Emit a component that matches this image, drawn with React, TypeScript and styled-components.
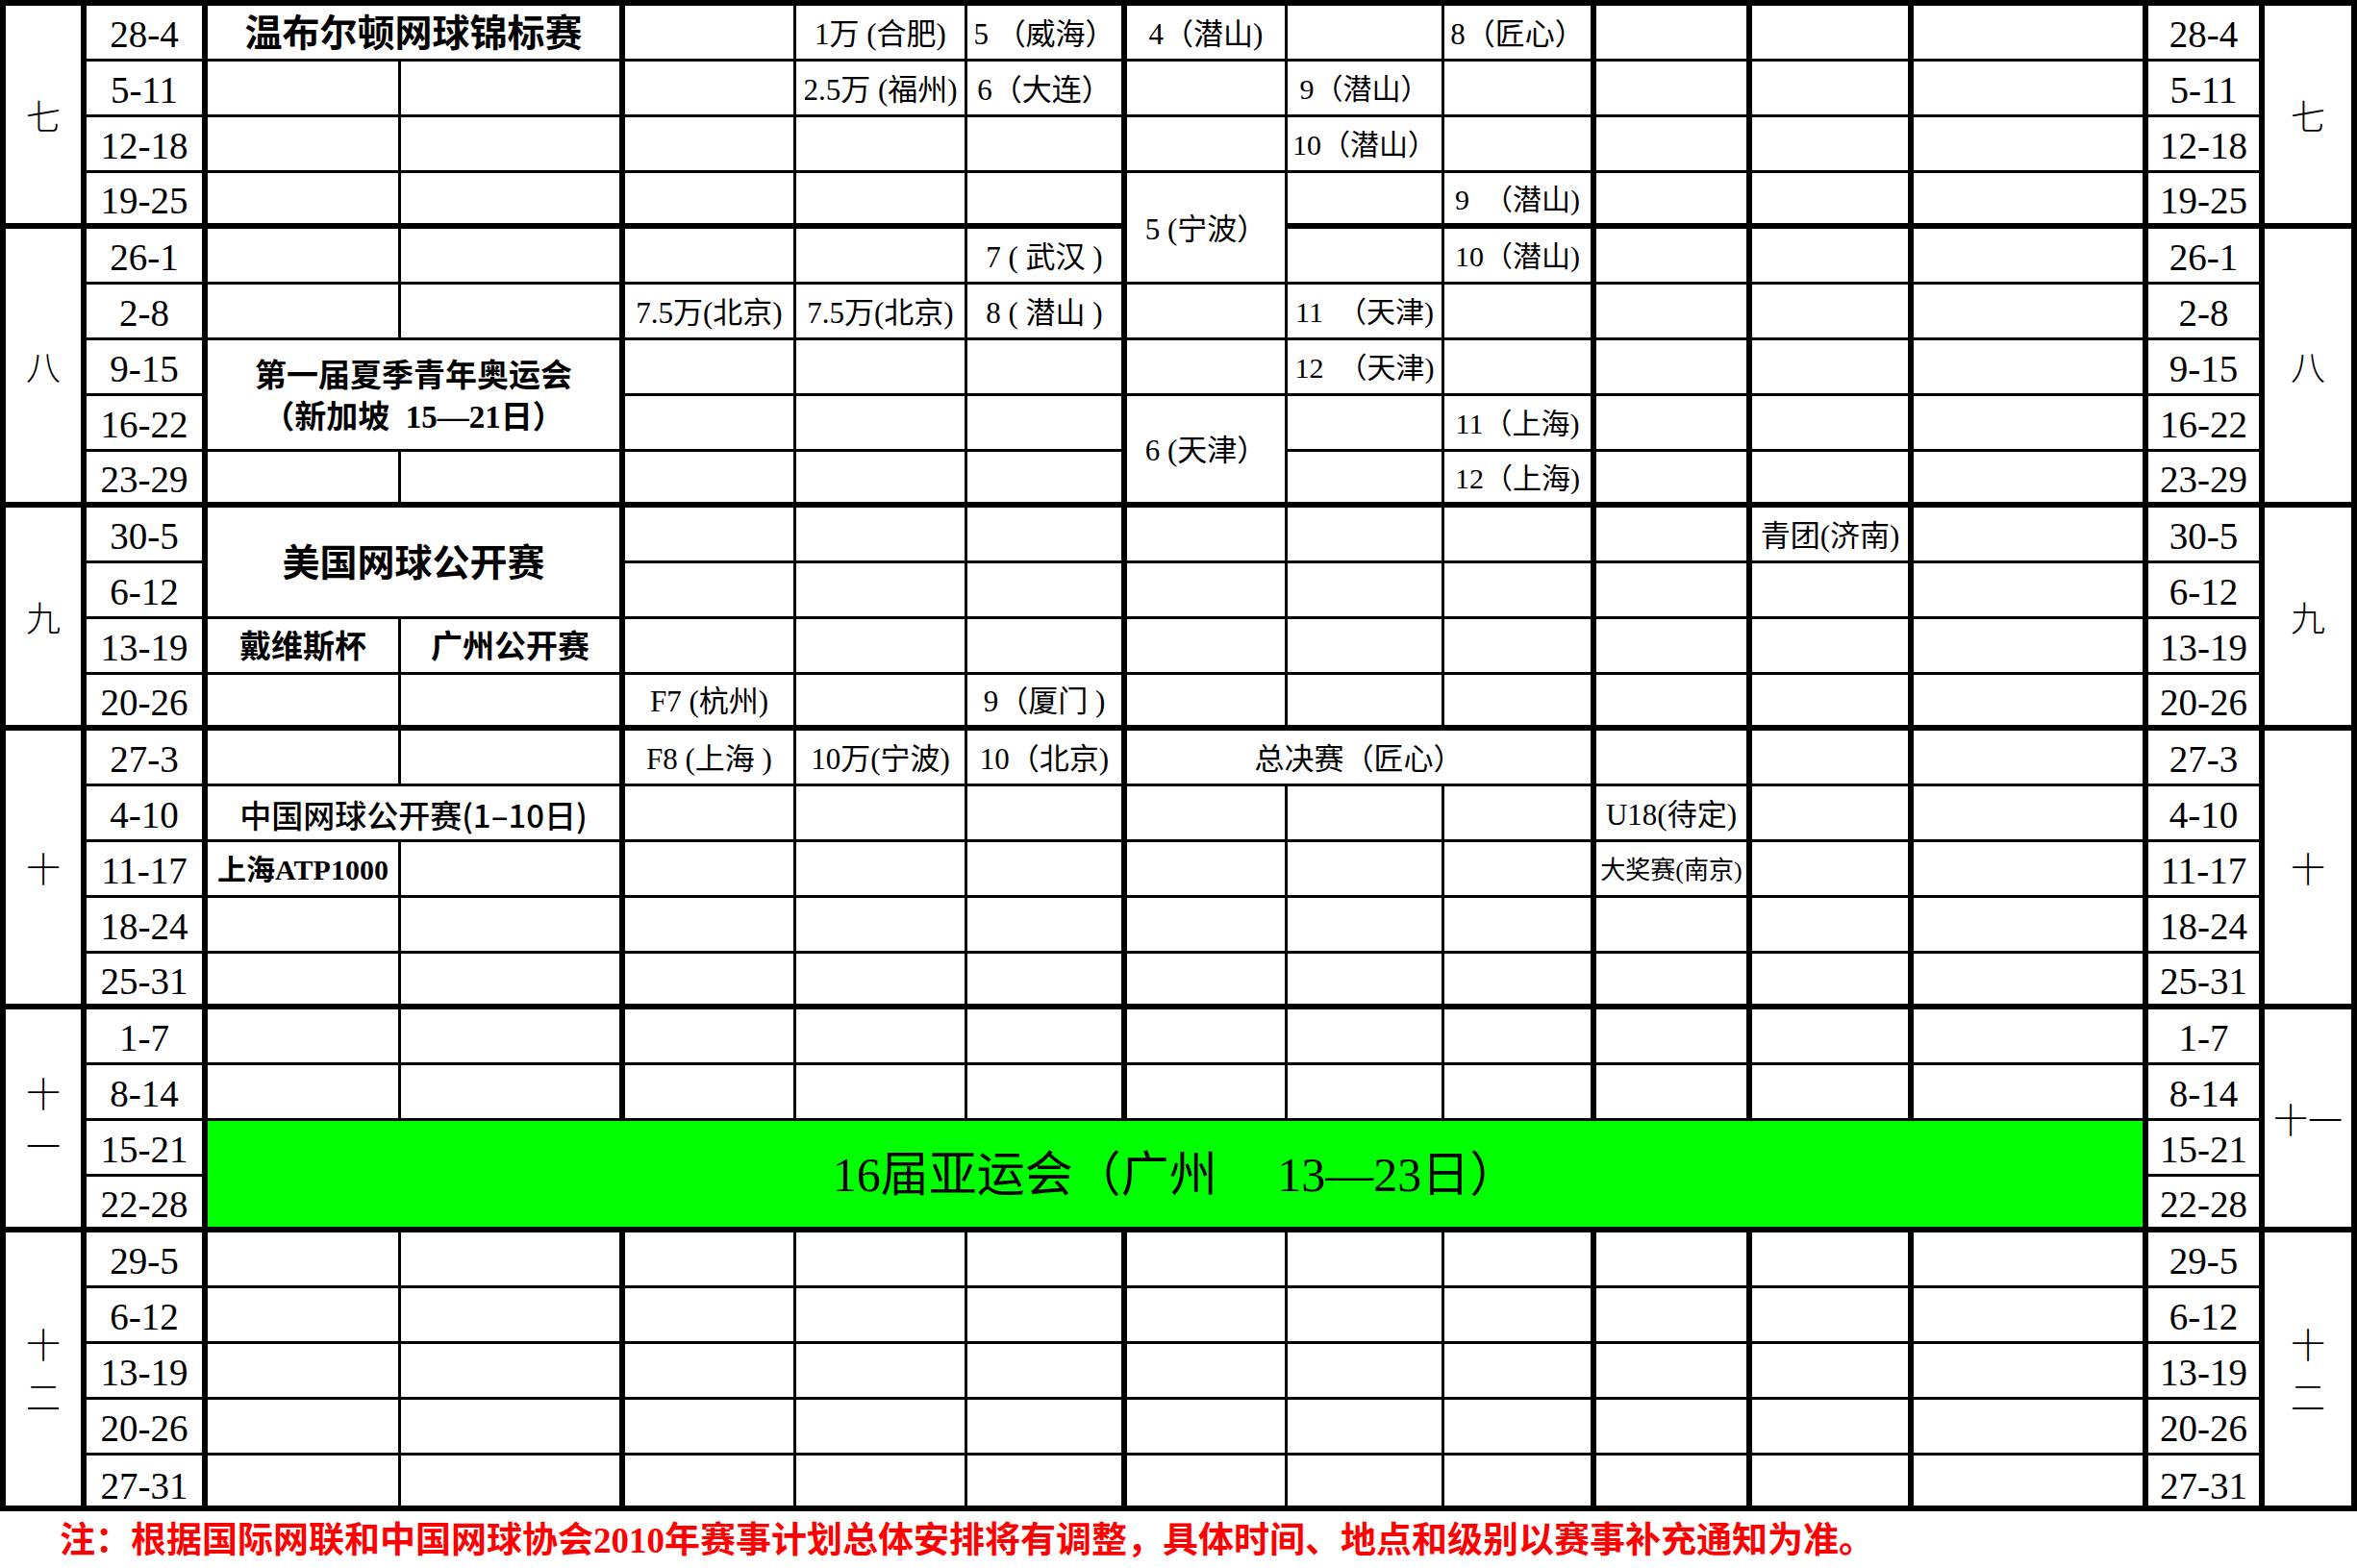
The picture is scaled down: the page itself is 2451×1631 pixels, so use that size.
import React from 'react';
import styled, { createGlobalStyle } from 'styled-components';

const GlobalStyle = createGlobalStyle`
  html, body { margin: 0; padding: 0; background: #ffffff; }
  body { font-family: "Liberation Serif", "Noto Sans CJK SC", serif; color: #000; }
`;

const COL_WIDTHS = [84, 126, 201, 233, 178, 178, 166, 167, 163, 158, 162, 168, 244, 121, 96];
const RIGHT_LINE = [6, 6, 3, 6, 3, 3, 6, 3, 3, 6, 6, 6, 6, 6, 6];
const MONTH_END = new Set([4, 9, 13, 18, 22, 27]);
const ROWS = 27;
const COLS = 15;

const Page = styled.div`
  width: 2451px;
`;

const ScheduleGrid = styled.div`
  display: grid;
  grid-template-columns: ${COL_WIDTHS.map((w) => `${w}px`).join(' ')};
  grid-template-rows: repeat(${ROWS}, 58px);
  border-top: 6px solid #000;
  border-left: 6px solid #000;
`;

interface CellProps {
  $r: number;
  $c: number;
  $rs: number;
  $cs: number;
  $rb: number;
  $bb: number;
}

const Cell = styled.div<CellProps>`
  grid-row: ${(p) => p.$r} / span ${(p) => p.$rs};
  grid-column: ${(p) => p.$c} / span ${(p) => p.$cs};
  border-right: ${(p) => p.$rb}px solid #000;
  border-bottom: ${(p) => p.$bb}px solid #000;
  box-sizing: border-box;
  display: flex;
  align-items: center;
  justify-content: center;
  white-space: nowrap;
  overflow: hidden;
  min-width: 0;
  background: #fff;
`;

const MonthCell = styled(Cell)<{ $stack?: boolean }>`
  flex-direction: ${(p) => (p.$stack ? 'column' : 'row')};
  font-family: "Noto Sans CJK SC", sans-serif;
  font-weight: 300;
  font-size: 36px;
  line-height: ${(p) => (p.$stack ? '54px' : '40px')};
`;

const DateCell = styled(Cell)<{ $low?: boolean }>`
  font-family: "Liberation Serif", serif;
  font-size: 39px;
  line-height: 40px;
  align-items: ${(p) => (p.$low ? 'flex-end' : 'center')};
  padding-top: ${(p) => (p.$low ? 0 : 5)}px;
`;

type Variant = 'plain' | 'tight' | 'title' | 'bold' | 'youth' | 'sans' | 'atp' | 'small' | 'asian';

const VARIANT_FONT: Record<Variant, string> = {
  plain: 'font-size: 31px; font-weight: 400;',
  tight: 'font-size: 30px; font-weight: 400;',
  title: 'font-size: 39px; font-weight: 700;',
  bold: 'font-size: 33px; font-weight: 700;',
  youth: 'font-size: 33px; font-weight: 700;',
  sans: 'font-size: 33px; font-weight: 500; font-family: "Noto Sans CJK SC", sans-serif;',
  atp: 'font-size: 30px; font-weight: 700;',
  small: 'font-size: 26px; font-weight: 400;',
  asian: 'font-size: 50px; font-weight: 400;',
};

const EventCell = styled(Cell)<{ $v: Variant }>`
  font-family: "Liberation Serif", "Noto Sans CJK SC", serif;
  line-height: 1.15;
  padding-top: 4px;
  flex-direction: ${(p) => (p.$v === 'youth' ? 'column' : 'row')};
  background: ${(p) => (p.$v === 'asian' ? '#00ff00' : '#fff')};
  ${(p) => VARIANT_FONT[p.$v]}
`;

const YouthLine = styled.span`
  display: block;
  line-height: 43px;
`;

const StackChar = styled.span`
  display: block;
`;

const Note = styled.div`
  color: #ff0000;
  font-family: "Liberation Serif", "Noto Sans CJK SC", sans-serif;
  font-weight: 700;
  font-size: 37px;
  line-height: 44px;
  padding: 9px 0 0 62px;
  white-space: nowrap;
`;

interface Ev {
  r: number;
  c: number;
  rs?: number;
  cs?: number;
  text: React.ReactNode;
  v?: Variant;
}

const DATES = [
  '28-4', '5-11', '12-18', '19-25',
  '26-1', '2-8', '9-15', '16-22', '23-29',
  '30-5', '6-12', '13-19', '20-26',
  '27-3', '4-10', '11-17', '18-24', '25-31',
  '1-7', '8-14', '15-21', '22-28',
  '29-5', '6-12', '13-19', '20-26', '27-31',
];

interface Month {
  label: string;
  start: number;
  span: number;
  stackLeft?: boolean;
  stackRight?: boolean;
}

const MONTHS: Month[] = [
  { label: '七', start: 1, span: 4 },
  { label: '八', start: 5, span: 5 },
  { label: '九', start: 10, span: 4 },
  { label: '十', start: 14, span: 5 },
  { label: '十一', start: 19, span: 4, stackLeft: true },
  { label: '十二', start: 23, span: 5, stackLeft: true, stackRight: true },
];

const EVENTS: Ev[] = [
  { r: 1, c: 3, cs: 2, text: '温布尔顿网球锦标赛', v: 'title' },
  { r: 1, c: 6, text: '1万 (合肥)' },
  { r: 1, c: 7, text: '5 （威海）' },
  { r: 1, c: 8, text: '4（潜山)' },
  { r: 1, c: 10, text: '8（匠心）' },
  { r: 2, c: 6, text: '2.5万 (福州)' },
  { r: 2, c: 7, text: '6（大连）' },
  { r: 2, c: 9, text: '9（潜山）', v: 'tight' },
  { r: 3, c: 9, text: '10（潜山）', v: 'tight' },
  { r: 4, c: 8, rs: 2, text: '5 (宁波）' },
  { r: 4, c: 10, text: '9　（潜山)', v: 'tight' },
  { r: 5, c: 7, text: '7 ( 武汉 )' },
  { r: 5, c: 10, text: '10（潜山)', v: 'tight' },
  { r: 6, c: 5, text: '7.5万(北京)' },
  { r: 6, c: 6, text: '7.5万(北京)' },
  { r: 6, c: 7, text: '8 ( 潜山 )' },
  { r: 6, c: 9, text: '11　（天津)', v: 'tight' },
  {
    r: 7,
    c: 3,
    rs: 2,
    cs: 2,
    v: 'youth',
    text: (
      <>
        <YouthLine>第一届夏季青年奥运会</YouthLine>
        <YouthLine>（新加坡&nbsp;&nbsp;15—21日）</YouthLine>
      </>
    ),
  },
  { r: 7, c: 9, text: '12　（天津)', v: 'tight' },
  { r: 8, c: 8, rs: 2, text: '6 (天津）' },
  { r: 8, c: 10, text: '11（上海)', v: 'tight' },
  { r: 9, c: 10, text: '12（上海)', v: 'tight' },
  { r: 10, c: 3, rs: 2, cs: 2, text: '美国网球公开赛', v: 'title' },
  { r: 10, c: 12, text: '青团(济南)' },
  { r: 12, c: 3, text: '戴维斯杯', v: 'bold' },
  { r: 12, c: 4, text: '广州公开赛', v: 'bold' },
  { r: 13, c: 5, text: 'F7 (杭州)' },
  { r: 13, c: 7, text: '9（厦门 )' },
  { r: 14, c: 5, text: 'F8 (上海 )' },
  { r: 14, c: 6, text: '10万(宁波)' },
  { r: 14, c: 7, text: '10（北京)' },
  { r: 14, c: 8, cs: 3, text: '总决赛（匠心）' },
  { r: 15, c: 3, cs: 2, text: '中国网球公开赛(1–10日)', v: 'sans' },
  { r: 15, c: 11, text: 'U18(待定)' },
  { r: 16, c: 3, text: '上海ATP1000', v: 'atp' },
  { r: 16, c: 11, text: '大奖赛(南京)', v: 'small' },
  { r: 21, c: 3, rs: 2, cs: 11, text: '16届亚运会（广州　 13—23日）', v: 'asian' },
];

const rightLine = (c: number, cs: number) => RIGHT_LINE[c + cs - 2];
const bottomLine = (r: number, rs: number) => (MONTH_END.has(r + rs - 1) ? 6 : 3);

function buildCells(): React.ReactNode[] {
  const occ: boolean[][] = Array.from({ length: ROWS + 1 }, () => Array(COLS + 1).fill(false));
  const out: React.ReactNode[] = [];
  const mark = (r: number, c: number, rs: number, cs: number) => {
    for (let i = r; i < r + rs; i++) for (let j = c; j < c + cs; j++) occ[i][j] = true;
  };

  MONTHS.forEach((m) => {
    [1, 15].forEach((col) => {
      const stack = col === 1 ? m.stackLeft : m.stackRight;
      mark(m.start, col, m.span, 1);
      out.push(
        <MonthCell
          key={`m-${m.start}-${col}`}
          $r={m.start}
          $c={col}
          $rs={m.span}
          $cs={1}
          $rb={rightLine(col, 1)}
          $bb={bottomLine(m.start, m.span)}
          $stack={stack}
        >
          {stack ? m.label.split('').map((ch, i) => <StackChar key={i}>{ch}</StackChar>) : m.label}
        </MonthCell>
      );
    });
  });

  DATES.forEach((d, i) => {
    const r = i + 1;
    [2, 14].forEach((col) => {
      mark(r, col, 1, 1);
      out.push(
        <DateCell
          key={`d-${r}-${col}`}
          $r={r}
          $c={col}
          $rs={1}
          $cs={1}
          $rb={rightLine(col, 1)}
          $bb={bottomLine(r, 1)}
          $low={r === ROWS}
        >
          {d}
        </DateCell>
      );
    });
  });

  EVENTS.forEach((e, i) => {
    const rs = e.rs ?? 1;
    const cs = e.cs ?? 1;
    mark(e.r, e.c, rs, cs);
    out.push(
      <EventCell
        key={`e-${i}`}
        $r={e.r}
        $c={e.c}
        $rs={rs}
        $cs={cs}
        $rb={rightLine(e.c, cs)}
        $bb={bottomLine(e.r, rs)}
        $v={e.v ?? 'plain'}
      >
        {e.text}
      </EventCell>
    );
  });

  for (let r = 1; r <= ROWS; r++) {
    for (let c = 1; c <= COLS; c++) {
      if (occ[r][c]) continue;
      out.push(
        <Cell
          key={`x-${r}-${c}`}
          $r={r}
          $c={c}
          $rs={1}
          $cs={1}
          $rb={rightLine(c, 1)}
          $bb={bottomLine(r, 1)}
        />
      );
    }
  }
  return out;
}

export default function App() {
  return (
    <Page>
      <GlobalStyle />
      <ScheduleGrid>{buildCells()}</ScheduleGrid>
      <Note>注：根据国际网联和中国网球协会2010年赛事计划总体安排将有调整，具体时间、地点和级别以赛事补充通知为准。</Note>
    </Page>
  );
}
